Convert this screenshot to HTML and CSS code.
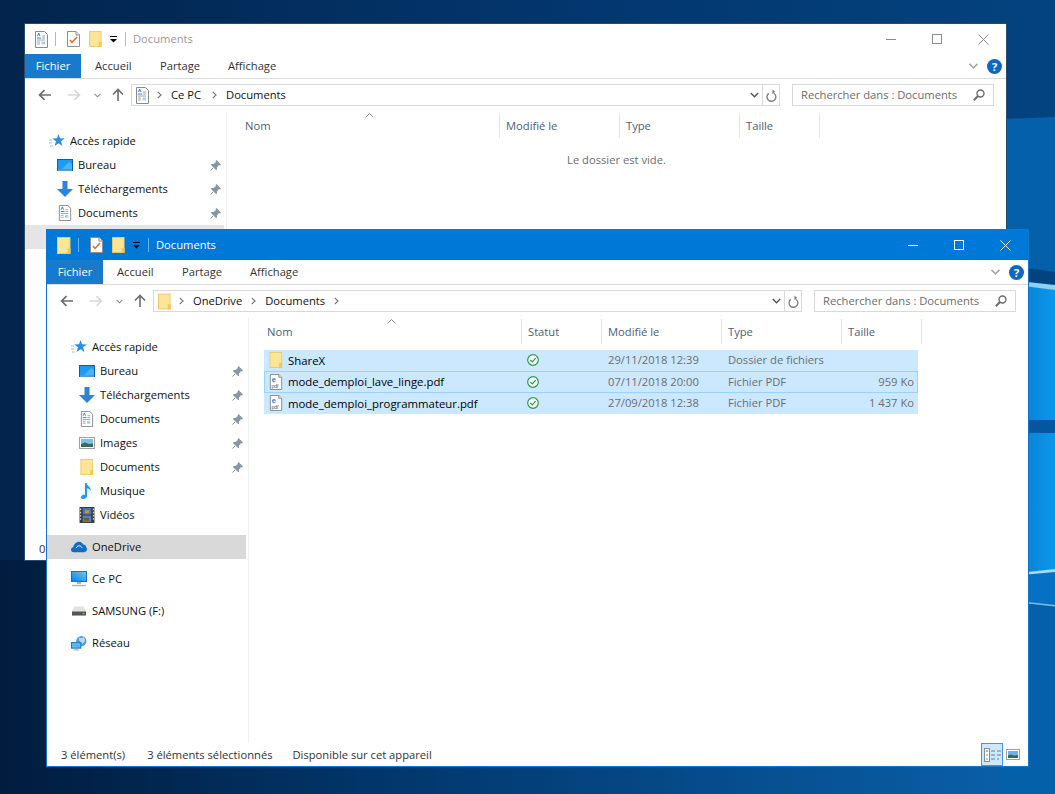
FILE: index.html
```html
<!DOCTYPE html>
<html lang="fr">
<head>
<meta charset="utf-8">
<title>Documents</title>
<link rel="stylesheet" href="styles.css">
</head>
<body>
<svg class="sprite" aria-hidden="true">
  <defs>
    <linearGradient id="scr" x1="0" y1="1" x2="1" y2="0"><stop offset="0" stop-color="#0a84e0"/><stop offset="1" stop-color="#6cc6f6"/></linearGradient>
    <symbol id="folder" viewBox="0 0 14 17"><rect x=".5" y=".5" width="12.5" height="16" fill="#fde597" stroke="#ebca6d"/><path d="M10.5 11.5h3v5.5h-3z" fill="#f6c64f"/></symbol>
    <symbol id="doc" viewBox="0 0 13 17"><path d="M.5.500h9l3 3v13H.5z" fill="#fff" stroke="#8a8a8a"/><path d="M2.500 5l1.200-3 1.200 3" fill="none" stroke="#2c7fd6"/><path d="M2 7h4" stroke="#2c7fd6"/><path d="M7 5h3M7 7h3M2 9h8M2 11h3M2 13h3" stroke="#a2a2a2"/><path d="M6.500 10.500h3.500v3h-3.500z" fill="#a8d0f0"/></symbol>
    <symbol id="task" viewBox="0 0 13 16"><path d="M.5.500h8.500l3.500 3.500v11.500H.5z" fill="#fff" stroke="#8e8e8e"/><path d="M9 .5v3.500h3.500" fill="#e6e6e6" stroke="#8e8e8e"/><path d="M3 9l2 2.500L10 6" fill="none" stroke="#e8622a" stroke-width="1.400"/></symbol>
    <symbol id="star" viewBox="0 0 16 14"><path d="M9.500 0l1.500 4.300 4.800.1-3.800 2.900 1.400 4.600-3.900-2.700-3.900 2.700 1.400-4.600-3.800-2.900 4.800-.1z" fill="#2a8fe0"/><path d="M0 6h3M0 9h3M1 12h3" stroke="#8cc6f2"/></symbol>
    <symbol id="desk" viewBox="0 0 16 12"><rect width="16" height="12" fill="#0c5fb0"/><rect x="1" y="1" width="14" height="9" fill="#1b9cf2"/><path d="M5 10l7-7 3 2v5z" fill="#49b4f6"/><path d="M1 11h14" stroke="#9fd3f7"/></symbol>
    <symbol id="down" viewBox="0 0 16 16"><path d="M5.500 0h5v8H16l-8 8-8-8h5.500z" fill="#2b84d8"/></symbol>
    <symbol id="pin" viewBox="0 0 11 11"><path d="M6.500 0L11 4.500 10 5.500 9 5 7 7.500 7 9.500 6 10 1 5 1.500 4 3.500 4 6 2 5.500 1z" fill="#8795a4"/><path d="M3 8L.5 10.500" stroke="#8795a4"/></symbol>
    <symbol id="pic" viewBox="0 0 16 12"><rect x=".5" y=".5" width="15" height="11" fill="#fff" stroke="#a0a0a0"/><rect x="2" y="2" width="12" height="8" fill="#7cc0ec"/><path d="M2 7l4-1.500 4 1.500 4-.5V10H2z" fill="#3a6a5c"/></symbol>
    <symbol id="note" viewBox="0 0 12 16"><path d="M4 0h1.500c.5 3 4.500 3.500 4.500 8-1-2-3-2.500-4-2.500V13c0 2-2 3-4 3s-2.500-1.500-1.500-3 2.500-1.500 3.500-1z" fill="#1a9cf0"/></symbol>
    <symbol id="film" viewBox="0 0 14 15"><rect width="14" height="15" fill="#3b3b3b"/><rect x="3" y="1" width="8" height="6" fill="#3a78c8"/><rect x="3" y="8" width="8" height="6" fill="#4a86d4"/><path d="M5 3h4v3H5z" fill="#d98c2c"/><path d="M4 10h5v3H4z" fill="#7a5a28"/><path d="M1 1.500v12M13 1.500v12" stroke="#ddd" stroke-dasharray="1.500 1.500"/></symbol>
    <symbol id="cloud" viewBox="0 0 17 11"><path d="M3 11C1 11 0 9.800 0 8.400 0 7 1 6 2.300 5.800 3 2.600 5.600 0 8.500 0c2 0 3.500 1.200 4.300 2.800C14.800 3 16 4 16 5.500c.7.500 1 1.300 1 2.500 0 1.800-1.300 3-3 3z" fill="#0f6cc4"/><path d="M5.500 6.500c.8-1.800 2.500-2.700 4-2.200 1.300.4 2 1.400 2.300 2.200" fill="none" stroke="#fff" stroke-width="1"/></symbol>
    <symbol id="pc" viewBox="0 0 16 16"><rect width="16" height="11" fill="#0d77cf"/><rect x="1" y="1" width="14" height="9" fill="url(#scr)"/><path d="M6 11h4v2H6z" fill="#a8b4bd"/><path d="M1 14.500h14" stroke="#aab4bc" stroke-width="1.400"/></symbol>
    <symbol id="drive" viewBox="-1 -3.500 16 16"><path d="M2.500 0h9L14 4.500V9H0V4.500z" fill="#e2e2e2"/><rect y="5" width="14" height="4" fill="#555"/><path d="M10.500 7h2" stroke="#52d052" stroke-width="1.400"/></symbol>
    <symbol id="net" viewBox="0 0 17 16"><circle cx="11" cy="6" r="5.500" fill="#5a9ad8"/><path d="M8 2l3 1 3-1 1 4-3 3-3-3z" fill="#bcd8ee"/><rect y="7" width="11" height="7" fill="#0d77cf"/><rect x="1" y="8" width="9" height="5" fill="#55b8f4"/><path d="M4 14h3v1H4z" fill="#8899a5"/><path d="M2.500 15.500h6" stroke="#a8b4bd"/></symbol>
    <symbol id="pdf" viewBox="0 0 13 17"><path d="M.5.500h9l3 3v13H.5z" fill="#fff" stroke="#8a8a8a"/><path d="M9.500.5v3h3" fill="#e6e6e6" stroke="#8a8a8a"/><text class="pdf-e" x="2" y="8">e</text><text class="pdf-t" x="1.600" y="14.800">pdf</text></symbol>
    <symbol id="ok" viewBox="0 0 12 12"><circle cx="6" cy="6" r="5.300" fill="#fff" stroke="#2a9a4a" stroke-width="1.200"/><path d="M3.300 6l2 2 3.400-3.800" fill="none" stroke="#2a9a4a" stroke-width="1.200"/></symbol>
    <symbol id="arrow-l" viewBox="0 0 12 11"><path d="M12 5.500H1.500M6 1L1.500 5.500 6 10" fill="none" stroke="currentColor" stroke-width="1.600"/></symbol>
    <symbol id="arrow-r" viewBox="0 0 12 11"><path d="M0 5.500h10.500M6 1l4.500 4.500L6 10" fill="none" stroke="currentColor" stroke-width="1.600"/></symbol>
    <symbol id="arrow-u" viewBox="0 0 12 13"><path d="M6 13V1.500M1 6.500l5-5 5 5" fill="none" stroke="currentColor" stroke-width="1.600"/></symbol>
    <symbol id="chev-d" viewBox="0 0 8 5"><path d="M.7.700L4 4l3.300-3.300" fill="none" stroke="currentColor" stroke-width="1.300"/></symbol>
    <symbol id="chev-r" viewBox="0 0 5 8"><path d="M.8.800L4 4 .8 7.200" fill="none" stroke="currentColor" stroke-width="1.200"/></symbol>
    <symbol id="caret" viewBox="0 0 9 5"><path d="M.5 4.500l4-4 4 4" fill="none" stroke="currentColor"/></symbol>
    <symbol id="refresh" viewBox="0 0 12 13"><path d="M8.500 3A4.800 4.800 0 1 1 3 3.200" fill="none" stroke="currentColor" stroke-width="1.500" transform="translate(0 1)"/><path d="M7 0v5l3-2.500z" fill="currentColor"/></symbol>
    <symbol id="search" viewBox="0 0 12 12"><circle cx="7.500" cy="4.500" r="3.500" fill="none" stroke="currentColor" stroke-width="1.400"/><path d="M5 7L.8 11.200" stroke="currentColor" stroke-width="2"/></symbol>
    <symbol id="drop" viewBox="0 0 7 7"><path d="M0 .5h7" stroke="currentColor"/><path d="M0 3h7L3.500 6.500z" fill="currentColor"/></symbol>
    <symbol id="min" viewBox="0 0 10 10"><path d="M0 5.500h10" stroke="currentColor"/></symbol>
    <symbol id="max" viewBox="0 0 10 10"><rect x=".5" y=".5" width="9" height="9" fill="none" stroke="currentColor"/></symbol>
    <symbol id="close" viewBox="0 0 11 11"><path d="M.5.500l10 10M10.500.500l-10 10" stroke="currentColor"/></symbol>
    <symbol id="details" viewBox="0 0 17 14"><rect x=".5" y=".5" width="5" height="13" fill="#fff" stroke="#8a8a8a"/><path d="M2 3h2" stroke="#555"/><path d="M2 7h2" stroke="#4aa0e8"/><path d="M2 11h2" stroke="#e8622a"/><path d="M7 3h4M13 3h4M7 7h4M13 7h4M7 11h4M13 11h2" stroke="#777"/></symbol>
    <symbol id="large" viewBox="0 0 14 11"><rect x=".5" y=".5" width="13" height="10" fill="#fff" stroke="#a0a0a0"/><rect x="2" y="2" width="10" height="7" fill="#6ab4e8"/><path d="M2 6.500l3-1 3 1 4-.5V9H2z" fill="#3a6a5c"/></symbol>
  </defs>
</svg>

<main class="desktop">
  <svg class="wallpaper" viewBox="0 0 1055 794" preserveAspectRatio="none" aria-hidden="true">
    <defs>
      <linearGradient id="base" x1="0" y1="0" x2="1" y2="0"><stop offset="0" stop-color="#02244c"/><stop offset=".5" stop-color="#03356c"/><stop offset="1" stop-color="#03437f"/></linearGradient>
      <linearGradient id="low" x1="0" y1="0" x2="1" y2="0"><stop offset="0" stop-color="#011c3e"/><stop offset=".4" stop-color="#02396f"/><stop offset="1" stop-color="#0a62ad"/></linearGradient>
      <linearGradient id="bright" x1="0" y1="0" x2="1" y2="0"><stop offset="0" stop-color="#0670c4"/><stop offset="1" stop-color="#0c97ec"/></linearGradient>
    </defs>
    <rect width="1055" height="794" fill="url(#base)"/>
    <rect y="560" width="1055" height="234" fill="url(#low)"/>
    <path d="M1000 119l55-2v155l-55-8z" fill="#0460ab"/>
    <path d="M1000 280l55 8v132h-55z" fill="url(#bright)"/>
    <path d="M1000 420h55v13h-55z" fill="#0456a0"/>
    <path d="M1000 433h55v137l-55 5z" fill="url(#bright)"/>
    <path d="M1000 575l55-5v36l-55-6z" fill="#0670c4"/>
    <path d="M1000 600l55 6v188h-55z" fill="#0560aa"/>
    <path d="M1000 279l55 6v5l-55-7z" fill="#8fd0f0"/>
    <path d="M1000 575l55-6v3l-55 5z" fill="#a5dcf6"/>
    <path d="M1000 599l55 6v1.500l-55-6z" fill="#7cc0e8"/>
  </svg>

  <section class="window window-back">
    <header class="titlebar">
      <svg class="qa-first qa-doc"><use href="#doc"/></svg>
      <span class="qa-sep"></span>
      <svg class="qa-task"><use href="#task"/></svg>
      <svg class="qa-folder"><use href="#folder"/></svg>
      <svg class="qa-drop"><use href="#drop"/></svg>
      <span class="qa-sep qa-sep-last"></span>
      <span class="win-title">Documents</span>
      <div class="win-buttons">
        <span class="win-btn"><svg class="wb"><use href="#min"/></svg></span>
        <span class="win-btn"><svg class="wb"><use href="#max"/></svg></span>
        <span class="win-btn"><svg class="wb wb-close"><use href="#close"/></svg></span>
      </div>
    </header>
    <nav class="ribbon">
      <span class="tab tab-file">Fichier</span>
      <span class="tab tab-a">Accueil</span>
      <span class="tab tab-b">Partage</span>
      <span class="tab tab-c">Affichage</span>
      <svg class="rib-chev"><use href="#chev-d"/></svg>
      <span class="help">?</span>
    </nav>
    <div class="addressbar">
      <svg class="nav-back"><use href="#arrow-l"/></svg>
      <svg class="nav-fwd"><use href="#arrow-r"/></svg>
      <svg class="nav-recent"><use href="#chev-d"/></svg>
      <svg class="nav-up"><use href="#arrow-u"/></svg>
      <div class="addr">
        <svg class="addr-icon addr-doc"><use href="#doc"/></svg>
        <svg class="crumb-chev crumb-first"><use href="#chev-r"/></svg>
        <span class="crumb crumb-pc">Ce PC</span>
        <svg class="crumb-chev"><use href="#chev-r"/></svg>
        <span class="crumb">Documents</span>
        <svg class="addr-drop"><use href="#chev-d"/></svg>
        <span class="addr-refresh"><svg class="refresh"><use href="#refresh"/></svg></span>
      </div>
      <div class="search"><span class="search-text">Rechercher dans : Documents</span><svg class="search-icon"><use href="#search"/></svg></div>
    </div>
    <div class="main">
      <aside class="sidebar">
        <div class="group">
          <div class="item head"><svg class="ni"><use href="#star"/></svg><span>Accès rapide</span></div>
          <div class="item child"><svg class="ni"><use href="#desk"/></svg><span>Bureau</span><svg class="pin"><use href="#pin"/></svg></div>
          <div class="item child"><svg class="ni"><use href="#down"/></svg><span>Téléchargements</span><svg class="pin"><use href="#pin"/></svg></div>
          <div class="item child"><svg class="ni"><use href="#doc"/></svg><span>Documents</span><svg class="pin"><use href="#pin"/></svg></div>
          <div class="item child selected-soft"></div>
        </div>
      </aside>
      <div class="content">
        <div class="columns columns-back">
          <span class="col">Nom<svg class="sort"><use href="#caret"/></svg></span>
          <span class="col">Modifié le</span>
          <span class="col">Type</span>
          <span class="col">Taille</span>
        </div>
        <p class="empty">Le dossier est vide.</p>
      </div>
    </div>
    <footer class="statusbar"><span class="st-count">0</span></footer>
  </section>

  <section class="window window-front">
    <header class="titlebar">
      <svg class="qa-first qa-fold"><use href="#folder"/></svg>
      <span class="qa-sep"></span>
      <svg class="qa-task"><use href="#task"/></svg>
      <svg class="qa-folder"><use href="#folder"/></svg>
      <svg class="qa-drop"><use href="#drop"/></svg>
      <span class="qa-sep qa-sep-last"></span>
      <span class="win-title">Documents</span>
      <div class="win-buttons">
        <span class="win-btn"><svg class="wb"><use href="#min"/></svg></span>
        <span class="win-btn"><svg class="wb"><use href="#max"/></svg></span>
        <span class="win-btn"><svg class="wb wb-close"><use href="#close"/></svg></span>
      </div>
    </header>
    <nav class="ribbon">
      <span class="tab tab-file">Fichier</span>
      <span class="tab tab-a">Accueil</span>
      <span class="tab tab-b">Partage</span>
      <span class="tab tab-c">Affichage</span>
      <svg class="rib-chev"><use href="#chev-d"/></svg>
      <span class="help">?</span>
    </nav>
    <div class="addressbar">
      <svg class="nav-back"><use href="#arrow-l"/></svg>
      <svg class="nav-fwd"><use href="#arrow-r"/></svg>
      <svg class="nav-recent"><use href="#chev-d"/></svg>
      <svg class="nav-up"><use href="#arrow-u"/></svg>
      <div class="addr">
        <svg class="addr-icon addr-fold"><use href="#folder"/></svg>
        <svg class="crumb-chev crumb-first"><use href="#chev-r"/></svg>
        <span class="crumb">OneDrive</span>
        <svg class="crumb-chev"><use href="#chev-r"/></svg>
        <span class="crumb">Documents</span>
        <svg class="crumb-chev"><use href="#chev-r"/></svg>
        <svg class="addr-drop"><use href="#chev-d"/></svg>
        <span class="addr-refresh"><svg class="refresh"><use href="#refresh"/></svg></span>
      </div>
      <div class="search"><span class="search-text">Rechercher dans : Documents</span><svg class="search-icon"><use href="#search"/></svg></div>
    </div>
    <div class="main">
      <aside class="sidebar">
        <div class="group">
          <div class="item head"><svg class="ni"><use href="#star"/></svg><span>Accès rapide</span></div>
          <div class="item child"><svg class="ni"><use href="#desk"/></svg><span>Bureau</span><svg class="pin"><use href="#pin"/></svg></div>
          <div class="item child"><svg class="ni"><use href="#down"/></svg><span>Téléchargements</span><svg class="pin"><use href="#pin"/></svg></div>
          <div class="item child"><svg class="ni"><use href="#doc"/></svg><span>Documents</span><svg class="pin"><use href="#pin"/></svg></div>
          <div class="item child"><svg class="ni"><use href="#pic"/></svg><span>Images</span><svg class="pin"><use href="#pin"/></svg></div>
          <div class="item child"><svg class="ni"><use href="#folder"/></svg><span>Documents</span><svg class="pin"><use href="#pin"/></svg></div>
          <div class="item child"><svg class="ni"><use href="#note"/></svg><span>Musique</span></div>
          <div class="item child"><svg class="ni"><use href="#film"/></svg><span>Vidéos</span></div>
        </div>
        <div class="group"><div class="item head selected"><svg class="ni"><use href="#cloud"/></svg><span>OneDrive</span></div></div>
        <div class="group"><div class="item head"><svg class="ni"><use href="#pc"/></svg><span>Ce PC</span></div></div>
        <div class="group"><div class="item head"><svg class="ni"><use href="#drive"/></svg><span>SAMSUNG (F:)</span></div></div>
        <div class="group"><div class="item head"><svg class="ni"><use href="#net"/></svg><span>Réseau</span></div></div>
      </aside>
      <div class="content">
        <div class="columns columns-front">
          <span class="col">Nom<svg class="sort"><use href="#caret"/></svg></span>
          <span class="col">Statut</span>
          <span class="col">Modifié le</span>
          <span class="col">Type</span>
          <span class="col">Taille</span>
        </div>
        <div class="rows">
          <div class="row">
            <span class="name"><svg class="fi"><use href="#folder"/></svg>ShareX</span>
            <span class="status"><svg class="ok"><use href="#ok"/></svg></span>
            <span class="meta">29/11/2018 12:39</span>
            <span class="meta">Dossier de fichiers</span>
            <span class="meta size"></span>
          </div>
          <div class="row focused">
            <span class="name"><svg class="fi"><use href="#pdf"/></svg>mode_demploi_lave_linge.pdf</span>
            <span class="status"><svg class="ok"><use href="#ok"/></svg></span>
            <span class="meta">07/11/2018 20:00</span>
            <span class="meta">Fichier PDF</span>
            <span class="meta size">959 Ko</span>
          </div>
          <div class="row">
            <span class="name"><svg class="fi"><use href="#pdf"/></svg>mode_demploi_programmateur.pdf</span>
            <span class="status"><svg class="ok"><use href="#ok"/></svg></span>
            <span class="meta">27/09/2018 12:38</span>
            <span class="meta">Fichier PDF</span>
            <span class="meta size">1 437 Ko</span>
          </div>
        </div>
      </div>
    </div>
    <footer class="statusbar">
      <span class="st-count">3 élément(s)</span>
      <span class="st-sel">3 éléments sélectionnés</span>
      <span class="st-avail">Disponible sur cet appareil</span>
      <span class="view view-on"><svg class="v-details"><use href="#details"/></svg></span>
      <span class="view"><svg class="v-large"><use href="#large"/></svg></span>
    </footer>
  </section>
</main>
</body>
</html>
```
FILE: styles.css
```css
* { box-sizing: border-box; }
html, body { margin: 0; padding: 0; }
body {
  width: 1055px;
  height: 794px;
  overflow: hidden;
  font-family: "Open Sans", "Noto Sans", sans-serif;
  font-size: 11.2px;
  color: #111;
}
svg { display: block; flex: none; }
.sprite { position: absolute; width: 0; height: 0; }
.desktop { position: relative; width: 1055px; height: 794px; overflow: hidden; }
.wallpaper { position: absolute; inset: 0; width: 1055px; height: 794px; }

/* windows sit on a free desktop canvas */
.window {
  position: absolute;
  width: 983px;
  height: 538px;
  display: flex;
  flex-direction: column;
  background: #fff;
  border: 1px solid #0d78d2;
}
.window-back { left: 24px; top: 23px; border-color: #2a4a68; }
.window-front { left: 46px; top: 229px; }

/* title bar */
.titlebar { height: 30px; display: flex; align-items: center; padding-left: 10px; }
.window-front .titlebar { background: #0078d7; color: #fff; }
.window-back .titlebar { color: #9a9a9a; }
.qa-first { width: 14px; height: 17px; }
.qa-doc { width: 13px; }
.qa-sep { width: 1px; height: 14px; margin: 0 0 0 7px; background: #b8b8b8; }
.window-front .qa-sep { background: #6fb2ea; }
.qa-sep + .qa-task { margin-left: 11px; }
.qa-task { width: 13px; height: 16px; }
.qa-folder { width: 13px; height: 16px; margin-left: 9px; }
.qa-drop { width: 7px; height: 7px; margin-left: 8px; color: #000; }
.qa-sep-last { margin-left: 8px; }
.win-title { margin-left: 7px; padding-bottom: 2px; }
.win-buttons { margin-left: auto; display: flex; align-items: center; height: 100%; }
.win-btn { width: 46px; height: 100%; display: flex; align-items: center; justify-content: center; }
.wb { width: 10px; height: 10px; }
.wb-close { width: 11px; height: 11px; }
.window-back .wb { color: #8c8c8c; }

/* ribbon tabs */
.ribbon {
  height: 25px;
  flex: none;
  display: flex;
  align-items: center;
  border-bottom: 1px solid #dadbdc;
  color: #333;
}
.tab { padding-bottom: 2px; }
.tab-file {
  width: 56px;
  height: 24px;
  display: flex;
  align-items: center;
  justify-content: center;
  background: #1979ca;
  color: #fff;
}
.tab-a { margin-left: 14px; width: 65px; }
.tab-b { width: 68px; }
.rib-chev { margin-left: auto; width: 11px; height: 6px; color: #a8a8a8; }
.help {
  width: 15px;
  height: 15px;
  margin: 0 4px 0 8px;
  border-radius: 50%;
  background: #0d68c2;
  color: #fff;
  font-weight: 700;
  font-size: 11px;
  line-height: 15px;
  text-align: center;
}

/* address bar */
.addressbar { height: 33px; flex: none; display: flex; align-items: flex-start; padding-top: 5px; }
.nav-back, .nav-fwd { width: 13px; height: 12px; margin-top: 5px; }
.nav-back { margin-left: 13px; color: #6d6d6d; }
.nav-fwd { margin-left: 17px; color: #d8d8d8; }
.nav-recent { width: 7px; height: 5px; margin: 9px 0 0 13px; color: #8a8a8a; }
.nav-up { width: 12px; height: 13px; margin: 4px 0 0 11px; color: #6d6d6d; }
.addr {
  width: 649px;
  height: 22px;
  margin-left: 7px;
  border: 1px solid #d9d9d9;
  display: flex;
  align-items: center;
  color: #111;
}
.addr-icon { width: 13px; height: 17px; margin-left: 4px; }
.crumb { padding-bottom: 2px; }
.crumb-pc { margin-right: 2px; }
.crumb-chev { width: 5px; height: 8px; color: #777; margin: 0 9px; }
.crumb-first { margin-left: 8px; }
.addr-drop { margin-left: auto; width: 9px; height: 6px; color: #555; }
.addr-refresh {
  width: 17px;
  height: 100%;
  margin-left: 3px;
  border-left: 1px solid #d9d9d9;
  display: flex;
  align-items: center;
  justify-content: center;
}
.refresh { width: 11px; height: 13px; color: #808080; }
.search {
  width: 202px;
  height: 22px;
  margin-left: 12px;
  border: 1px solid #d9d9d9;
  display: flex;
  align-items: center;
  justify-content: space-between;
  padding: 0 8px;
  color: #6d6d6d;
}
.search-text { padding-bottom: 2px; }
.search-icon { width: 12px; height: 12px; color: #6d6d6d; }

/* main split */
.main { flex: 1; min-height: 0; display: flex; }
.sidebar {
  width: 202px;
  flex: none;
  padding-top: 17px;
  border-right: 1px solid #f0f0f0;
  display: flex;
  flex-direction: column;
  gap: 8px;
}
.item { height: 24px; width: 199px; display: flex; align-items: center; gap: 5px; }
.item > span { padding-bottom: 2px; }
.head { padding-left: 24px; }
.child { padding-left: 32px; }
.ni { width: 16px; height: 16px; }
.pin { width: 11px; height: 11px; margin-left: auto; margin-right: 3px; }
.selected { background: #d9d9d9; }
.selected-soft { background: #e5e5e5; }

/* file list */
.content { flex: 1; min-width: 0; }
.columns {
  display: grid;
  height: 25px;
  margin: 1px 0 0 12px;
  color: #4c607a;
}
.columns-front { grid-template-columns: 261px 80px 120px 120px 80px; }
.columns-back { grid-template-columns: 261px 120px 120px 80px; }
.col { position: relative; padding-left: 6px; display: flex; align-items: center; border-right: 1px solid #e5e5e5; }
.sort { position: absolute; left: 126px; top: 0; width: 9px; height: 5px; color: #8a8a8a; }
.empty { margin: 14px 0 0; text-align: center; color: #6d6d6d; }
.rows { margin: 6px 0 0 15px; width: 654px; }
.row {
  display: grid;
  grid-template-columns: 258px 80px 120px 120px 76px;
  height: 21px;
  align-items: center;
  background: #cce8ff;
}
.focused { height: 22px; box-shadow: inset 0 0 0 1px #99d1ff; }
.name { display: flex; align-items: center; gap: 5px; padding: 0 0 1px 5px; color: #000; font-size: 11.36px; }
.fi { width: 14px; height: 16px; }
.pdf-e { font: 700 8px "Liberation Sans", sans-serif; fill: #1f7ad0; }
.pdf-t { font: 5.500px "Liberation Sans", sans-serif; fill: #555; }
.status { padding: 0 0 1px 5px; }
.ok { width: 12px; height: 12px; }
.meta { padding: 0 0 2px 6px; color: #6d6d6d; }
.size { text-align: right; padding-right: 4px; }

/* status bar */
.statusbar { height: 23px; flex: none; display: flex; align-items: center; padding-left: 14px; color: #333; }
.st-sel { margin-left: 22px; }
.st-avail { margin-left: 20px; }
.view { display: flex; align-items: center; justify-content: center; height: 23px; }
.view-on {
  width: 22px;
  margin-left: auto;
  background: #cce8ff;
  border: 1px solid #3a9bdc;
}
.v-details { width: 17px; height: 14px; }
.v-large { width: 14px; height: 11px; margin: 0 8px 0 3px; }
```
